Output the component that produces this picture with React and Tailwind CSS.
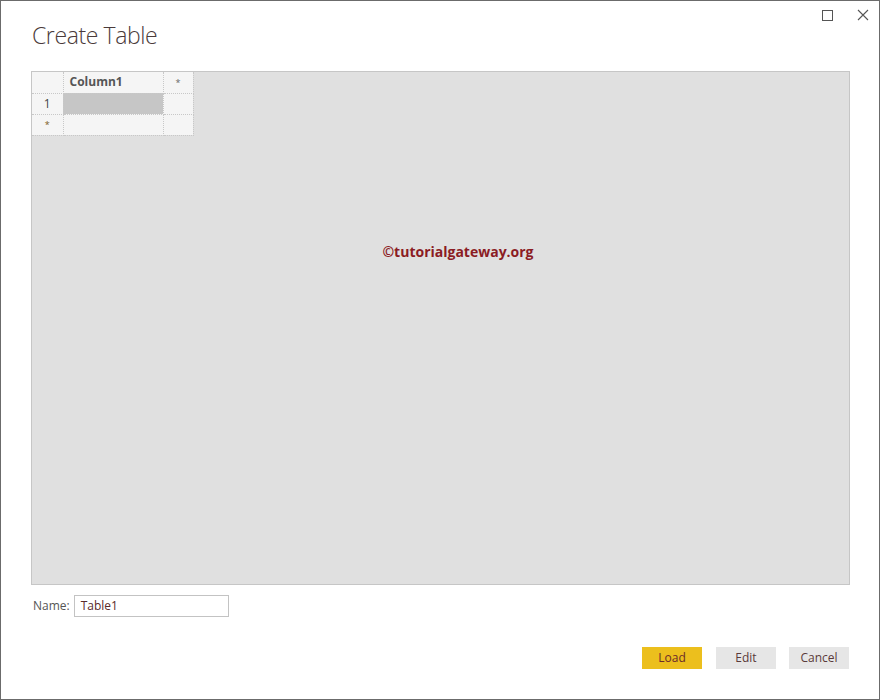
export default function App() {
  return (
    <div
      className="w-[880px] h-[700px] bg-white border border-[#6b6b6b] flex flex-col relative"
      style={{ fontFamily: '"Segoe UI", "Open Sans", "Liberation Sans", sans-serif' }}
    >
      {/* window controls */}
      <div className="absolute top-[8px] right-[10px] flex items-center gap-[24px]">
        <svg width="11" height="11" viewBox="0 0 11 11">
          <rect x="0.5" y="0.5" width="10" height="10" fill="none" stroke="#555" strokeWidth="1" />
        </svg>
        <svg width="12" height="12" viewBox="0 0 12 12">
          <path d="M1 1 L11 11 M11 1 L1 11" stroke="#555" strokeWidth="1.1" />
        </svg>
      </div>

      <h1 className="ml-[31px] mt-[19px] text-[23px] leading-[30px] font-light tracking-[-0.4px] text-[#4a3a3a]">
        Create Table
      </h1>

      {/* grid area */}
      <div className="ml-[30px] mt-[21px] w-[819px] h-[514px] bg-[#e0e0e0] border border-[#c6c6c6] relative">
        <table className="border-collapse text-[12px] text-[#444]">
          <tbody>
            <tr className="h-[21px]">
              <td className="w-[31px] bg-[#f5f5f5] border-r border-b border-dotted border-[#c8c8c8]"></td>
              <td className="w-[100px] bg-[#f5f5f5] border-r border-b border-dotted border-[#c8c8c8] pl-[6px] font-bold text-[#555]">
                Column1
              </td>
              <td className="w-[30px] bg-[#f5f5f5] border-r border-b border-dotted border-[#c8c8c8] text-center text-[9px] text-[#666]">
                *
              </td>
            </tr>
            <tr className="h-[21px]">
              <td className="bg-[#f5f5f5] border-r border-b border-dotted border-[#c8c8c8] text-center text-[#444]">
                1
              </td>
              <td className="bg-[#c6c6c6] border-r border-b border-dotted border-[#c8c8c8]"></td>
              <td className="bg-[#f5f5f5] border-r border-b border-dotted border-[#c8c8c8]"></td>
            </tr>
            <tr className="h-[21px]">
              <td className="bg-[#f5f5f5] border-r border-b border-dotted border-[#c8c8c8] text-center text-[9px] text-[#7a5a20]">
                *
              </td>
              <td className="bg-[#f5f5f5] border-r border-b border-dotted border-[#c8c8c8]"></td>
              <td className="bg-[#f5f5f5] border-r border-b border-dotted border-[#c8c8c8]"></td>
            </tr>
          </tbody>
        </table>
        <div
          className="absolute left-0 right-0 top-[169px] text-center text-[14px] font-bold text-[#8b1c24]"
          style={{ fontFamily: '"Open Sans", "Liberation Sans", sans-serif' }}
        >
          <span className="pl-[35px]">©tutorialgateway.org</span>
        </div>
      </div>

      {/* name row */}
      <div className="ml-[32px] mt-[10px] flex items-center gap-[4px]">
        <span className="text-[12px] text-[#555]">Name:</span>
        <div className="w-[155px] h-[22px] border border-[#c3c3c3] flex items-center pl-[6px] text-[12px] text-[#5a2a2a]">
          Table1
        </div>
      </div>

      {/* buttons */}
      <div className="mt-[30px] mr-[30px] flex justify-end gap-[14px]">
        <button className="w-[60px] h-[22px] bg-[#ecbf1d] text-[12px] text-[#6b2a2a]">Load</button>
        <button className="w-[60px] h-[22px] bg-[#e6e6e6] text-[12px] text-[#5a3a3a]">Edit</button>
        <button className="w-[60px] h-[22px] bg-[#e6e6e6] text-[12px] text-[#5a3a3a] ml-[-1px]">Cancel</button>
      </div>
    </div>
  )
}
